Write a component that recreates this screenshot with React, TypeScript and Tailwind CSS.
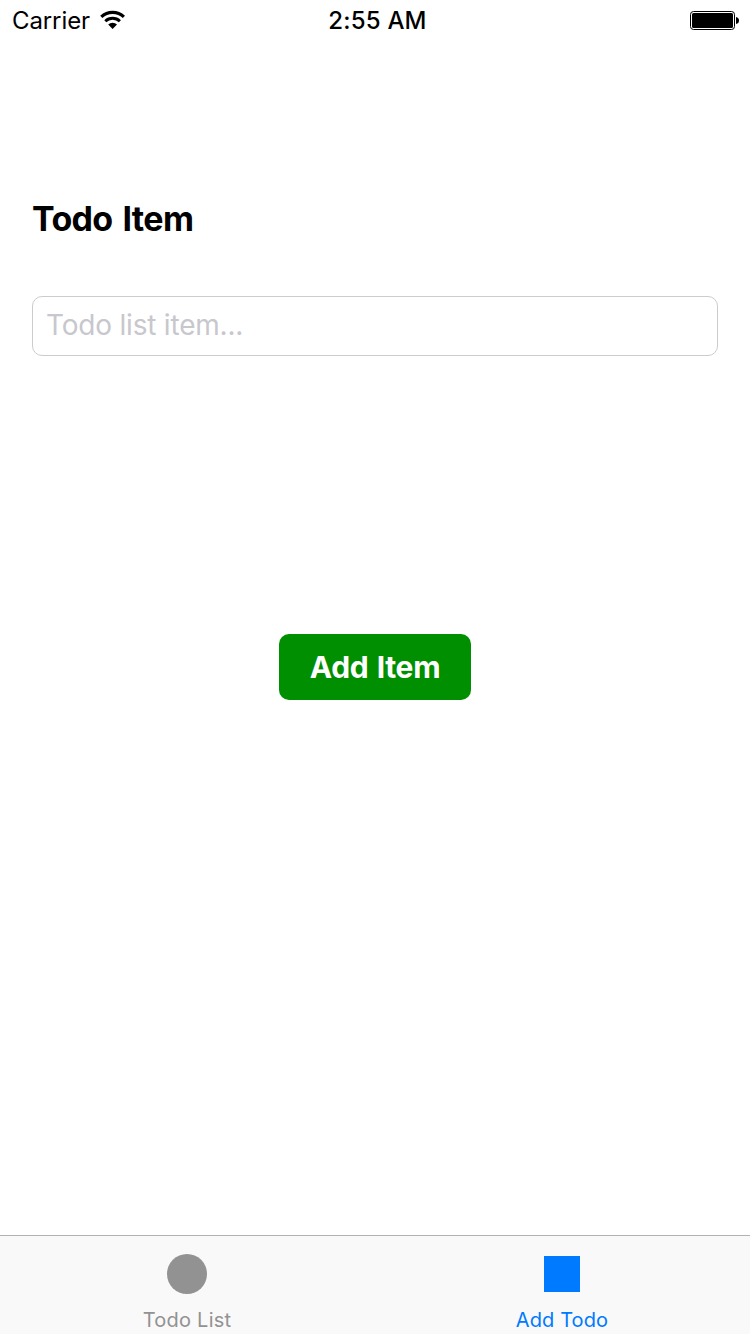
function StatusBar() {
  return (
    <header className="grid h-10 grid-cols-3 items-center pl-3 pr-[11px] text-[24px] leading-[38px] text-black">
      <div className="flex items-center gap-[10px]">
        <span className="pt-[2px] tracking-[-0.1px]">Carrier</span>
        <svg width="26" height="20" viewBox="0 0 26 20" aria-hidden="true">
          <path d="M1.3 6.8a16.5 16.5 0 0 1 22.6 0" fill="none" stroke="#000" strokeWidth="3.2" />
          <path d="M5.3 11.2a10.6 10.6 0 0 1 14.6 0" fill="none" stroke="#000" strokeWidth="2.9" />
          <path d="M8.2 14.6a6.4 6.4 0 0 1 8.8 0L12.6 19z" fill="#000" />
        </svg>
      </div>
      <time className="justify-self-center pl-1 pt-[2px] font-medium tracking-[0.2px]">2:55 AM</time>
      <svg className="justify-self-end" width="49" height="20" viewBox="0 0 49 20" aria-hidden="true">
        <rect x="0.5" y="1.5" width="44" height="18" rx="3" fill="none" stroke="#000" />
        <rect x="2" y="3" width="41" height="15" rx="1.5" fill="#000" />
        <path d="M46 7q3 .5 3 3.5t-3 3.5z" fill="#000" />
      </svg>
    </header>
  );
}

export default function App() {
  return (
    <div className="flex h-[1334px] w-[750px] flex-col bg-white font-['Inter','Liberation_Sans',sans-serif]">
      <StatusBar />
      <main className="flex flex-1 flex-col px-8 pt-[158px]">
        <label htmlFor="item" className="h-[42px] text-[34px] font-bold leading-[42px] tracking-[-0.65px] [word-spacing:2.5px] text-black">
          Todo Item
        </label>
        <input
          id="item"
          placeholder="Todo list item..."
          className="mt-14 h-[60px] w-full rounded-[10px] border border-[#cccccc] bg-white px-[13px] pb-[2px] text-[28px] tracking-[-0.2px] outline-none placeholder:text-[#c7c7cd]"
        />
        <button className="mt-[278px] h-[66px] w-48 self-center rounded-[10px] bg-[#008f00] pt-px text-[30px] font-bold tracking-[-0.3px] text-white [word-spacing:1.5px]">
          Add Item
        </button>
      </main>
      <nav className="grid h-[99px] grid-cols-2 border-t border-[#b2b2b2] bg-[#f9f9f9] text-[20px] leading-6">
        <button className="flex flex-col items-center pr-px text-[#929292]">
          <span className="mt-[18px] size-10 rounded-full bg-[#929292]" />
          <span className="mt-[14px] tracking-[0.25px]">Todo List</span>
        </button>
        <button className="flex flex-col items-center pr-px text-[#007aff]">
          <span className="mt-5 size-9 bg-[#007aff]" />
          <span className="mt-4 tracking-[0.1px]">Add Todo</span>
        </button>
      </nav>
    </div>
  );
}
